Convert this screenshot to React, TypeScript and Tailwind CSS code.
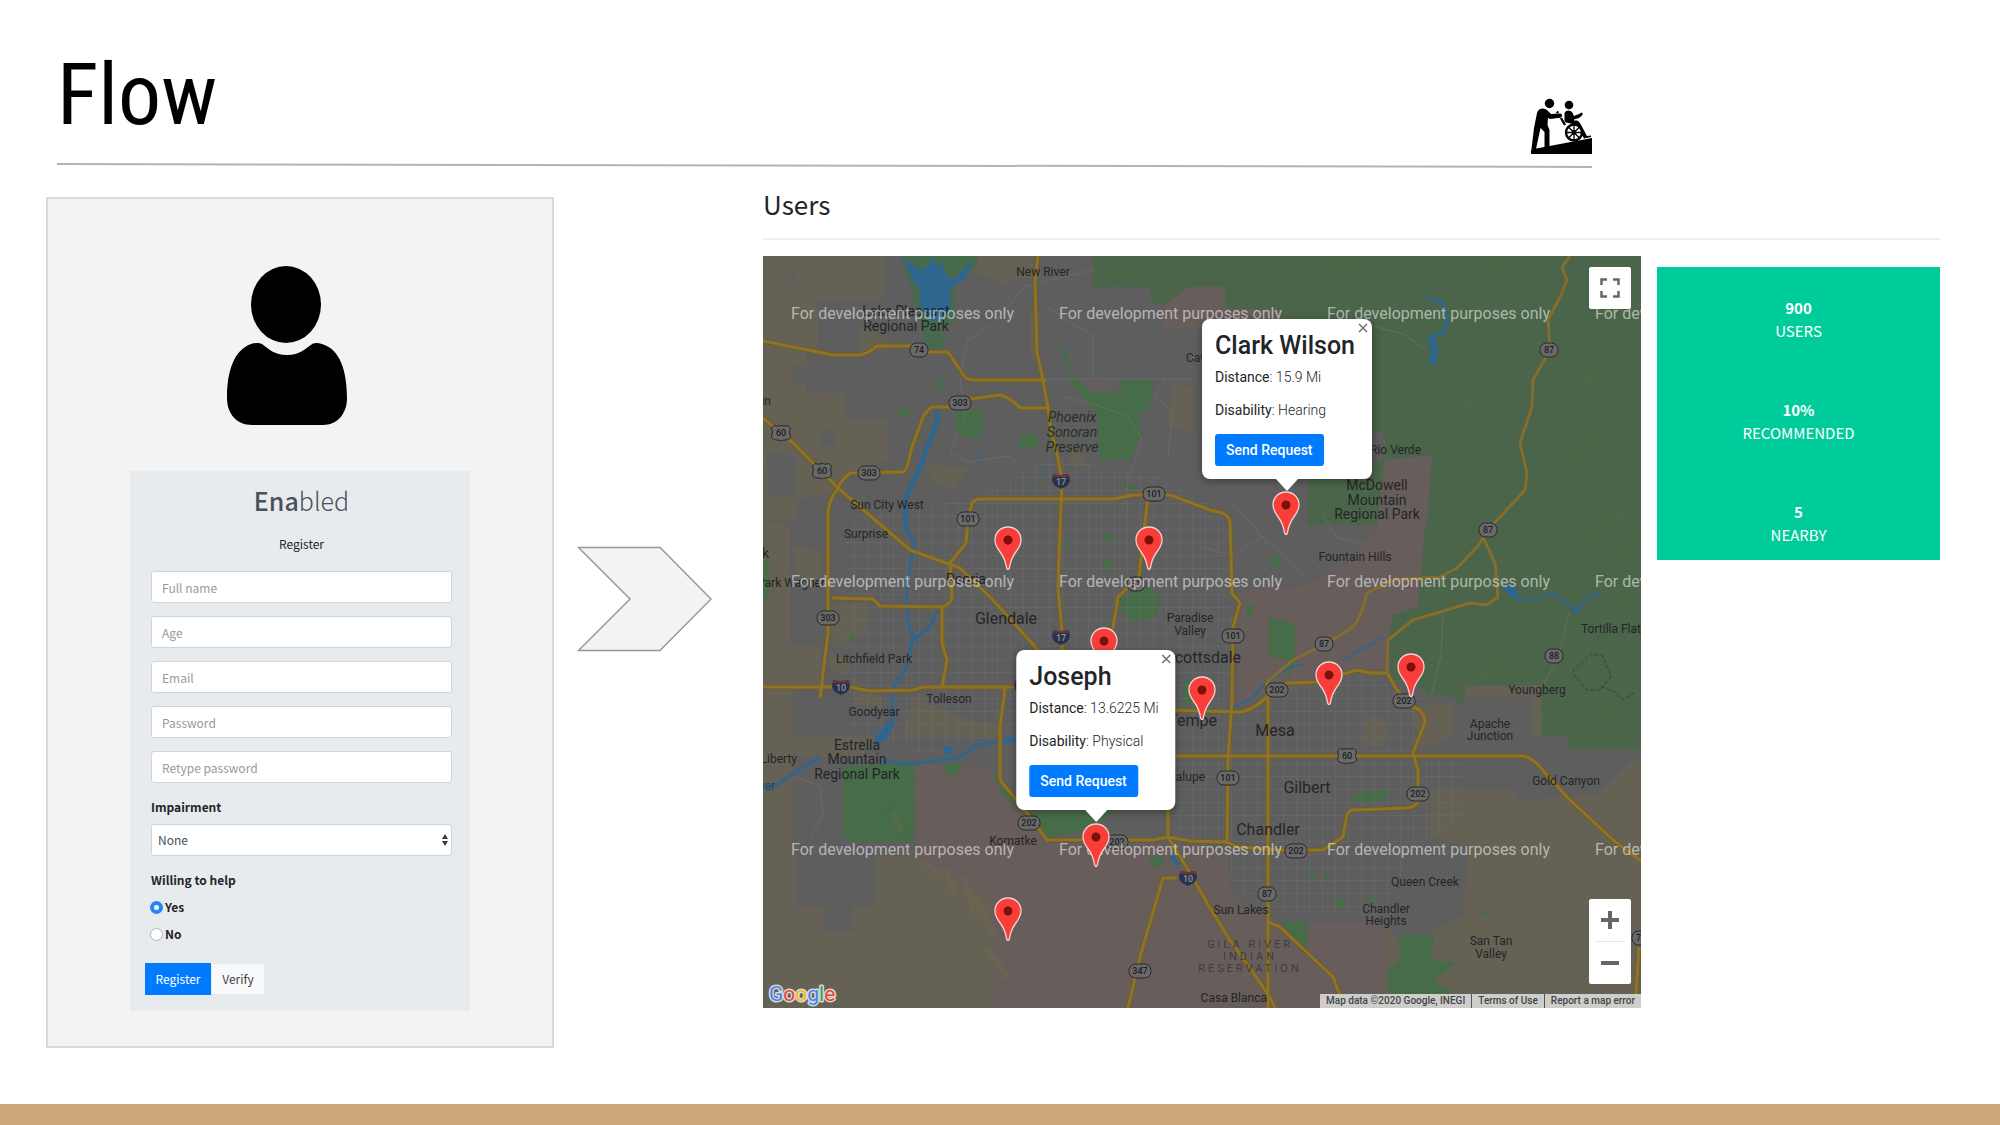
import { useState } from "react";

type Point = [number, number];

const ROADS = [
  // I-17
  "M275 0L272 24L274 97L280 124L285 152L288 176L294 197L299 224L297 274L295 331L299 377L299 431",
  // 74
  "M0 85L70 99H97Q106 97 114 90H150L165 96H185L202 121Q205 124 212 124H283",
  // 303
  "M285 152H257Q247 141 237 139L207 143L187 151H169Q162 156 160 161L149 191L144 211Q142 216 139 216L87 217Q78 224 74 234Q65 244 65 261V377L57 442",
  // 60 / Grand Ave
  "M0 162L30 187L59 216L74 231L104 257L147 294L197 312L230 344L275 394L299 431",
  // 101 west and north
  "M179 431L184 404L179 387V351Q188 348 189 341L187 307L203 287L205 264L209 247Q212 243 217 243H350L370 239H407L447 254L460 257Q467 261 467 267L469 337L477 347L470 371L469 444L465 504L464 587",
  "M69 342L110 343L117 350L179 351",
  // I-10
  "M0 431H87L107 435L150 434L160 431H350L405 470V581L427 617L447 652L467 684L507 741L512 752",
  // 202
  "M242 432L237 471V524L264 557L284 584H390L405 581L427 585L464 586L474 591L520 594H560L580 581L583 564Q584 555 589 554L644 552Q655 550 655 544V514L650 497L662 466Q661 454 650 451L634 434L624 417H607L594 414L554 426L524 427L504 441Q488 455 477 456L405 454",
  // US 60
  "M405 500H760Q770 502 777 511L804 541L850 584L879 606",
  // 51
  "M385 240L376 321L355 341L350 371L345 431",
  // 87 south
  "M504 426L505 444V752",
  "M505 666L517 671L570 721L582 752",
  // 347
  "M414 622H400L377 701L365 752",
  "M876 691L872 752",
];

const MOUNTAIN_ROADS = [
  "M807 0L799 11L804 24L799 37L785 64L787 94L770 124L769 151L757 187L764 217L762 234L725 274L714 291L694 312L677 321L630 324L604 337Q598 362 590 371L564 387L530 404L504 426",
  "M720 281L732 307L735 341L724 349L707 347L650 364L625 384L624 417",
];

const MINOR_ROADS = [
  "M202 165L197 120L205 84L232 66L262 30",
  "M262 30L330 14M281 123H430",
  "M285 52L330 80V119M297 140L330 148L364 160L379 182L366 222L360 250",
  "M402 120L392 140L410 156L405 200",
  "M610 70L640 78L664 94",
  "M680 358L678 400L668 440",
  "M806 356L796 400L780 429",
  "M30 520L57 530L60 560L48 580",
  "M120 152L147 180M437 290L470 300L500 280L540 320",
  "M197 172L187 196L206 206L245 200L262 212M470 250L490 268L505 290M560 260L574 282L600 288",
];

const RIVERS = [
  { d: "M174 154L175 164L168 181L157 211L142 244L143 274", w: 5 },
  { d: "M143 274L152 287L144 327V361L150 381L144 411L130 431L129 467", w: 3 },
  { d: "M129 467L114 484", w: 7 },
  { d: "M150 384L167 371L174 354", w: 3 },
  { d: "M-3 534L10 531L57 501M118 505L150 508L197 501L214 489L254 484", w: 3 },
  { d: "M664 41L680 47L684 64L680 78L667 81", w: 3 },
  { d: "M667 82L672 92L669 108", w: 7 },
  { d: "M740 331L757 344L774 342L790 337L814 355L820 345L837 337", w: 2 },
  { d: "M454 457L487 444L504 426L527 411L540 408M580 404L620 381", w: 2 },
  { d: "M215 192L216 216M268 230L282 220L282 210M300 102L309 86", w: 1 },
  { d: "M408 600L416 610", w: 5 },
];

const PARKS = [
  "M297 91L304 96L309 118L327 136H359V124H392L385 154L374 159L379 177L367 204L337 204L334 157L312 132Z",
  "M193 156L217 152L222 170L213 184L193 178Z",
  "M255 180L275 178V192L257 194Z",
  "M132 152L150 154L140 164Z",
  "M80 511L151 506V586L87 586L80 577Z",
  "M227 514L248 534L262 556L357 554L320 574L284 582L262 556L240 540Z",
  "M357 343L382 328L397 341L392 362L367 367L358 355Z",
  "M336 300L352 307L343 317Z",
  "M508 299L521 303L514 313L508 307Z",
  "M506 361L532 368V402L524 428V404L506 400Z",
  "M483 348L491 350L489 362L484 358Z",
  "M588 540L610 534H626L622 546L588 546Z",
  "M518 666H544L543 694Z",
  "M637 677L672 680L667 704L694 707L670 724L687 734L684 744H626L624 714L637 704Z",
  "M572 642L584 642L580 652H572Z",
  "M545 615L553 618L549 626Z",
  "M718 654L726 656L722 662Z",
  "M420 428L426 420L430 446L420 450Z",
  "M0 304L6 308V342H0Z",
  "M180 508L200 506L194 520L184 518Z",
  "M173 126L180 124V132L174 132Z",
  "M301 283L307 286L306 294L301 292Z",
  "M342 276L350 280L347 288L342 285Z",
  "M202 278L208 276L206 284Z",
  "M360 226L374 230L372 234L360 231Z",
  "M210 340L216 338L214 345Z",
  "M86 378L91 376L92 386L87 384Z",
  "M62 246L70 244L68 256L62 258Z",
  "M386 602L400 600V610L388 612Z",
  "M560 620L570 622L566 630Z",
  "M602 640L614 642L610 648Z",
];

const LABELS: { text: string; x: number; y: number; size?: "lg" | "md"; anchor?: "start" | "end" }[] = [
  { text: "New River", x: 280, y: 20 },
  { text: "Lake Pleasant", x: 143, y: 60, size: "md" },
  { text: "Regional Park", x: 143, y: 75, size: "md" },
  { text: "Cave Creek", x: 423, y: 106, anchor: "start" },
  { text: "in", x: 8, y: 149, anchor: "end" },
  { text: "Sun City West", x: 124, y: 253 },
  { text: "Surprise", x: 103, y: 282 },
  { text: "k", x: 6, y: 302, size: "md", anchor: "end" },
  { text: "Park Wagner", x: 62, y: 331, anchor: "end" },
  { text: "Peoria", x: 203, y: 328, size: "md" },
  { text: "Glendale", x: 243, y: 368, size: "lg" },
  { text: "Litchfield Park", x: 111, y: 407 },
  { text: "Tolleson", x: 186, y: 447 },
  { text: "Goodyear", x: 111, y: 460 },
  { text: "Estrella", x: 94, y: 494, size: "md" },
  { text: "Mountain", x: 94, y: 508, size: "md" },
  { text: "Regional Park", x: 94, y: 523, size: "md" },
  { text: "Liberty", x: 34, y: 507, anchor: "end" },
  { text: "Komatke", x: 250, y: 589 },
  { text: "Paradise", x: 427, y: 366 },
  { text: "Valley", x: 427, y: 379 },
  { text: "Scottsdale", x: 478, y: 407, size: "lg", anchor: "end" },
  { text: "Tempe", x: 454, y: 470, size: "lg", anchor: "end" },
  { text: "Guadalupe", x: 442, y: 525, anchor: "end" },
  { text: "Mesa", x: 512, y: 480, size: "lg" },
  { text: "Gilbert", x: 544, y: 537, size: "lg" },
  { text: "Chandler", x: 505, y: 579, size: "lg" },
  { text: "Fountain Hills", x: 592, y: 305 },
  { text: "McDowell", x: 614, y: 234, size: "md" },
  { text: "Mountain", x: 614, y: 249, size: "md" },
  { text: "Regional Park", x: 614, y: 263, size: "md" },
  { text: "Rio Verde", x: 658, y: 198, anchor: "end" },
  { text: "Tortilla Flat", x: 818, y: 377, anchor: "start" },
  { text: "Youngberg", x: 774, y: 438 },
  { text: "Apache", x: 727, y: 472 },
  { text: "Junction", x: 727, y: 484 },
  { text: "Gold Canyon", x: 803, y: 529 },
  { text: "Queen Creek", x: 662, y: 630 },
  { text: "Chandler", x: 623, y: 657 },
  { text: "Heights", x: 623, y: 669 },
  { text: "Sun Lakes", x: 478, y: 658 },
  { text: "San Tan", x: 728, y: 689 },
  { text: "Valley", x: 728, y: 702 },
  { text: "Casa Blanca", x: 504, y: 746, anchor: "end" },
];

const STATE_SHIELDS: [string, number, number][] = [
  ["74", 156, 94],
  ["303", 197, 147],
  ["303", 106, 217],
  ["101", 205, 263],
  ["101", 391, 238],
  ["303", 65, 362],
  ["51", 373, 328],
  ["202", 266, 567],
  ["202", 354, 586],
  ["101", 470, 380],
  ["87", 561, 388],
  ["202", 514, 434],
  ["202", 641, 445],
  ["101", 465, 522],
  ["202", 655, 538],
  ["202", 533, 595],
  ["87", 504, 638],
  ["347", 377, 715],
  ["87", 786, 94],
  ["87", 725, 274],
  ["88", 791, 400],
  ["79", 878, 682],
];

const US_SHIELDS: Point[] = [
  [18, 177],
  [59, 215],
  [584, 500],
];

const INTERSTATES: [string, number, number][] = [
  ["17", 298, 225],
  ["17", 298, 381],
  ["10", 78, 431],
  ["10", 260, 431],
  ["10", 425, 622],
];

const PINS: Point[] = [
  [245, 314],
  [386, 314],
  [341, 415],
  [523, 279],
  [439, 464],
  [566, 449],
  [648, 441],
  [333, 611],
  [245, 685],
];

const STATS = [
  { value: "900", label: "USERS" },
  { value: "10%", label: "RECOMMENDED" },
  { value: "5", label: "NEARBY" },
];

const FIELDS = [
  { name: "fullName", placeholder: "Full name", type: "text" },
  { name: "age", placeholder: "Age", type: "text" },
  { name: "email", placeholder: "Email", type: "email" },
  { name: "password", placeholder: "Password", type: "password" },
  { name: "retypePassword", placeholder: "Retype password", type: "password" },
];

const LABEL_SIZES = { lg: "text-[16px]", md: "text-[14px]" };

const RampLogo = () => (
  <svg viewBox="0 0 61 56" className="h-14 w-[61px]" aria-label="Enabled logo">
    <path d="M0 51.500L61 40V56H0z" />
    <circle cx="18.500" cy="5.500" r="4.700" />
    <path d="M9 11Q13 9.500 16 12L20 16L29 15.500Q31.500 16 31 18Q30.500 19.500 29 19.700L19 21L17 20L16.500 27L18.500 32L18.500 50H13.500V34L9.500 30L5 51H.5L3 30L6 15Q7 12 9 11z" />
    <circle cx="38" cy="7" r="4.300" />
    <path d="M35 13Q39 11.500 41 14L43 18L48 16L50.500 14.500Q52.500 15 51 17.500L48 20L43 21.500V22.500H46Q48 23 49.500 26L56 38L60 37.500V39L53 40.500L46 27L35 24.500Q33.500 24 33.500 22V15z" />
    <path d="M30 20L34 27M26 13.500L27 15" stroke="#000" strokeWidth="2.400" />
    <circle cx="43" cy="34.500" r="8" fill="#fff" stroke="#000" strokeWidth="2.400" />
    <path d="M43 26V43M34.500 34.500H51.500M37 28.500L49 40.500M49 28.500L37 40.500" stroke="#000" strokeWidth="1.300" />
    <circle cx="43" cy="34.500" r="2.400" />
  </svg>
);

const PersonIcon = () => (
  <svg viewBox="0 0 120 159" className="ml-[179px] h-[159px] w-[120px]" aria-hidden="true">
    <ellipse cx="59" cy="38.500" rx="35" ry="38.500" />
    <path d="M35 78C42 83 47 89 60 89C73 89 78 83 86 77.500Q90 76.500 95 78C113 83 120 105 120 132C120 148 110 159 96 159H25C10 159 0 148 0 132C0 105 7 84 24 78Q31 76 35 78z" />
  </svg>
);

const RegisterForm = () => {
  const [willing, setWilling] = useState("yes");

  return (
    <form
      onSubmit={(e) => e.preventDefault()}
      className="mx-[82px] mt-[46px] bg-[#e8ebee] pt-[11px] pr-[18px] pb-4 pl-[21px] text-[12px] leading-5 text-[#212529]"
    >
      <h2 className="text-center text-[25px] leading-9 font-light text-[#495057]">
        <span className="font-medium">Ena</span>bled
      </h2>
      <p className="mt-4 text-center">Register</p>

      <div className="mt-[17px] flex flex-col gap-[13px]">
        {FIELDS.map((field) => (
          <input
            key={field.name}
            name={field.name}
            type={field.type}
            placeholder={field.placeholder}
            aria-label={field.placeholder}
            className="h-8 w-full rounded-[3px] border border-[#ced4da] bg-white px-[10px] outline-none placeholder:text-[#939ba2] placeholder:opacity-100"
          />
        ))}
      </div>

      <label htmlFor="impairment" className="mt-[14px] block font-bold">
        Impairment
      </label>
      <div className="relative mt-[7px]">
        <select
          id="impairment"
          className="h-8 w-full appearance-none rounded-[3px] border border-[#ced4da] bg-white px-[6px] text-[#495057] outline-none"
        >
          <option>None</option>
          <option>Physical</option>
          <option>Hearing</option>
        </select>
        <svg viewBox="0 0 6 12" className="pointer-events-none absolute top-[10px] right-1 h-3 w-[6px]" fill="#343a40">
          <path d="M3 0L6 5H0zM3 12L6 7H0z" />
        </svg>
      </div>

      <fieldset className="mt-[14px]">
        <legend className="font-bold">Willing to help</legend>
        {["Yes", "No"].map((option) => (
          <label key={option} className="mt-[7px] -ml-px flex items-center gap-[2px] font-bold">
            <input
              type="radio"
              name="willing"
              checked={willing === option.toLowerCase()}
              onChange={() => setWilling(option.toLowerCase())}
              className="h-[13px] w-[13px] appearance-none rounded-full border border-[#adb5bd] bg-white checked:border-4 checked:border-[#2388f5]"
            />
            {option}
          </label>
        ))}
      </fieldset>

      <div className="mt-[19px] -ml-[6px] flex">
        <button type="submit" className="h-8 w-[66px] bg-[#007bff] text-white">
          Register
        </button>
        <button type="button" className="h-8 w-[54px] border border-[#e9ecef] bg-[#f8f9fa] text-[#444]">
          Verify
        </button>
      </div>
    </form>
  );
};

const MapCanvas = () => (
  <svg viewBox="0 0 879 752" preserveAspectRatio="xMinYMin slice" className="h-full w-full font-[Roboto,sans-serif]">
    <defs>
      <pattern id="streets" width="13" height="13" patternUnits="userSpaceOnUse">
        <path d="M0 .5H13M.5 0V13" stroke="#6b6c6d" strokeWidth=".8" opacity=".6" />
      </pattern>
      <filter id="soft">
        <feGaussianBlur stdDeviation="2" />
      </filter>
    </defs>

    <rect width="879" height="752" fill="#5e5e5f" />

    {/* Desert */}
    <g fill="#656155">
      <path d="M0 0H120V44H55V94H97V70L125 84V95H43V137H82V164H124V205L90 216L72 236L34 244V264H0z" />
      <path d="M0 264L27 270V390H57V430H30V480H110L100 500H30V600H32V650H60V676H90V650H112V600H152L229 640V752H0z" />
      <path d="M210 0H270V20L240 28L212 16z" />
      <path d="M64 350L104 345V378L70 392z" />
      <path d="M667 534H750L757 545L837 537L870 504L879 500V752H580L622 667L640 690L700 660L705 590L667 581z" />
      <path d="M702 430H779V481H770V441H702zM600 462H622V490H600zM645 451L690 447V480L660 492z" />
      <path d="M150 440L200 462L240 470V480L140 480zM410 128L430 130V176L404 170zM267 52H272V102H267z" />
      <path d="M163 207L205 213L190 234L170 228zM310 190L324 202L318 214L306 208z" />
      <path d="M88 420L118 442V452L90 448zM66 396L88 404L84 420L68 414zM30 290L60 296L56 330L34 322z" />
    </g>
    <g fill="#5e5e5f">
      <path d="M30 110H43V128H30zM56 175L72 172V190H56zM20 20L32 18V26zM4 196L34 200V240L6 238z" />
    </g>

    {/* Reservations */}
    <g fill="#675d5b">
      <path d="M151 506L225 510L262 556L284 584L437 588L465 600L467 637L507 667H622V752H229V640L152 604z" />
      <path d="M622 204L669 199L655 351L630 361L624 381V417H594L504 441L474 451V334L537 331L584 311L614 269z" />
      <path d="M425 31H462V52H517V74H400V50z" />
      <path d="M324 125L347 124V136H327z" />
    </g>

    {/* National forest */}
    <path
      d="M330 0V31H387V44L400 50L425 31H462V52L517 54L520 110L612 177H622V204H545V269H614L622 204L669 199L655 351L630 359L625 382L629 424H650L667 441H690L694 447H702V429H779V481H805V494H879V0z"
      fill="#4a6549"
    />
    <path d="M622 204L669 199L664 269L614 269z" fill="#675d5b" />
    <g stroke="#57703e" strokeWidth="3" opacity=".5" filter="url(#soft)">
      <path d="M700 20L740 8M560 12L600 4M810 130L840 118M700 150L730 140M820 290L870 250M840 310L879 280M810 200L850 170M700 430L740 410M820 470L850 450M350 20L380 12M830 60L850 50M640 150L660 142M846 350L870 336M760 460L776 450" />
    </g>
    <path d="M137 0L150 40L164 92H180V72L192 66V30L214 10V0z" fill="#47694c" />
    <g fill="#466c48">
      {PARKS.map((d) => (
        <path key={d} d={d} />
      ))}
    </g>
    <g stroke="#716c4c" strokeWidth="4" opacity=".7" filter="url(#soft)">
      <path d="M160 606L180 622M182 612L192 640M200 620L212 660M212 640L232 680M222 690L246 724M130 555L138 576" />
    </g>

    {/* Street grid of the urban area */}
    <path
      d="M84 262L205 244L290 200L400 222L467 260V330L474 451L504 441L594 417L662 440L660 496L700 497V560L650 594L620 660H510L470 630L464 588H405V500L240 480L160 500L80 470V380z"
      fill="url(#streets)"
    />

    <g fill="#2f668f">
      <path d="M139 0L150 24L157 34V57L172 66L187 57V36L192 28L202 24L206 12L211 6L204 8L197 18L188 24L180 14V4L176 12L168 0L166 10L158 14L148 8z" />
      <path d="M114 480L130 470L124 482L112 490zM181 490H189V498H181zM241 482L252 480V484L242 487z" />
      <path d="M740 330L752 330L757 344L748 342zM808 352L820 350L814 358z" />
    </g>
    <g stroke="#2f668f" fill="none" strokeLinejoin="round">
      {RIVERS.map((river) => (
        <path key={river.d} d={river.d} strokeWidth={river.w} />
      ))}
    </g>

    <g stroke="#6c6d6e" strokeWidth="1" fill="none" opacity=".8">
      {MINOR_ROADS.map((d) => (
        <path key={d} d={d} />
      ))}
    </g>
    <path
      d="M809 416L828 398L840 400L848 420L838 434L824 434L809 416M838 430L852 436L860 444L872 436"
      fill="none"
      stroke="#37433a"
      strokeDasharray="4 2"
    />

    <g fill="none" strokeLinejoin="round">
      {ROADS.map((d) => (
        <path key={d} d={d} stroke="#6f5d2b" strokeWidth="5" />
      ))}
      {ROADS.map((d) => (
        <path key={d} d={d} stroke="#8d7329" strokeWidth="3" />
      ))}
      {MOUNTAIN_ROADS.map((d) => (
        <path key={d} d={d} stroke="#856d2c" strokeWidth="3" />
      ))}
    </g>

    {/* Route shields */}
    <g textAnchor="middle" className="text-[9px] font-medium">
      {STATE_SHIELDS.map(([route, x, y]) => (
        <g key={`${route}-${x}`}>
          <rect
            x={route.length > 2 ? x - 11 : x - 9}
            y={y - 7}
            width={route.length > 2 ? 22 : 18}
            height="14"
            rx="6.500"
            fill="#69696a"
            stroke="#29292a"
          />
          <text x={x} y={y + 3} fill="#202021">
            {route}
          </text>
        </g>
      ))}
      {US_SHIELDS.map(([x, y]) => (
        <g key={x} transform={`translate(${x} ${y})`}>
          <path
            d="M-7 -7.500Q-3 -6 0 -7.500Q3 -6 7 -7.500L9.500 -5Q7.500 -1 9.500 3Q9 7 4 7Q1 7 0 8Q-1 7 -4 7Q-9 7 -9.500 3Q-7.500 -1 -9.500 -5z"
            fill="#69696a"
            stroke="#29292a"
          />
          <text y="3" fill="#202021">
            60
          </text>
        </g>
      ))}
      {INTERSTATES.map(([route, x, y]) => (
        <g key={`${x}-${y}`} transform={`translate(${x} ${y})`}>
          <path d="M-7.500 -7Q0 -5 7.500 -7Q11 0 6 5L0 8L-6 5Q-11 0 -7.500 -7z" fill="#27334c" />
          <path d="M-7.500 -7Q0 -5 7.500 -7L8.500 -4H-8.500z" fill="#6b3436" />
          <text y="4" fill="#8f9296">
            {route}
          </text>
        </g>
      ))}
    </g>

    {/* Place names */}
    <g fill="#242526">
      {LABELS.map(({ text, x, y, size, anchor }) => (
        <text
          key={`${text}-${y}`}
          x={x}
          y={y}
          textAnchor={anchor ?? "middle"}
          className={size ? LABEL_SIZES[size] : "text-[12px]"}
        >
          {text}
        </text>
      ))}
    </g>
    <g fill="#243024" textAnchor="middle" className="text-[14px] italic">
      <text x="309" y="166">Phoenix</text>
      <text x="309" y="181">Sonoran</text>
      <text x="309" y="196">Preserve</text>
    </g>
    <g fill="#3e3d3d" textAnchor="middle" className="text-[11px] tracking-[3px]">
      <text x="487" y="692">GILA RIVER</text>
      <text x="487" y="704">INDIAN</text>
      <text x="487" y="716">RESERVATION</text>
    </g>
    <text x="-4" y="534" fill="#1f4560" className="text-[12px]">
      ver
    </text>

    {/* Watermark, one per tile */}
    <g fill="#fff" fillOpacity=".55" className="text-[16px]">
      {[63, 331, 599].map((y) =>
        [28, 296, 564, 832].map((x) => (
          <text key={`${x}-${y}`} x={x} y={y}>
            For development purposes only
          </text>
        )),
      )}
    </g>
  </svg>
);

const Pin = ({ x, y }: { x: number; y: number }) => (
  <svg
    viewBox="0 0 28 44"
    className="absolute h-11 w-7 -translate-x-1/2 -translate-y-full"
    style={{ left: x, top: y }}
    aria-hidden="true"
  >
    <path
      d="M14 1C6.500 1 1 6.800 1 14C1 19 3.500 22.500 6.500 26.500C9.500 30.500 11.500 35 12.500 41.500Q13 43.500 14 43.500Q15 43.500 15.500 41.500C16.500 35 18.500 30.500 21.500 26.500C24.500 22.500 27 19 27 14C27 6.800 21.500 1 14 1z"
      fill="#f93e3a"
      stroke="#f3d3d1"
      strokeWidth="1.300"
    />
    <circle cx="14" cy="14" r="4.500" fill="#7c100c" />
  </svg>
);

interface InfoWindowProps {
  x: number;
  y: number;
  name: string;
  distance: string;
  disability: string;
}

const InfoWindow = ({ x, y, name, distance, disability }: InfoWindowProps) => (
  <div className="absolute -translate-x-1/2 -translate-y-full pb-[11px]" style={{ left: x, top: y }}>
    <div className="relative rounded-lg bg-white pt-3 pr-[17px] pb-[13px] pl-[13px] text-[14px] leading-5 text-[#212529] shadow-[0_2px_7px_1px_rgba(0,0,0,0.3)]">
      <button type="button" aria-label="Close" className="absolute top-1 right-1 h-[10px] w-[10px]">
        <svg viewBox="0 0 10 10" stroke="#6b6b6b" strokeWidth="1.400">
          <path d="M1 1L9 9M9 1L1 9" />
        </svg>
      </button>
      <h3 className="text-[25px] leading-[30px] font-medium">{name}</h3>
      <p className="mt-[6px] font-light">
        <span className="font-normal">Distance</span>: {distance}
      </p>
      <p className="mt-[13px] font-light">
        <span className="font-normal">Disability</span>: {disability}
      </p>
      <button type="button" className="mt-[14px] h-8 rounded-[3px] bg-[#007bff] px-[11px] font-medium text-white">
        Send Request
      </button>
      <svg viewBox="0 0 22 12" className="absolute top-full left-1/2 h-3 w-[22px] -translate-x-1/2" fill="#fff">
        <path d="M0 0H22L11 12z" />
      </svg>
    </div>
  </div>
);

const UsersMap = () => (
  <div className="relative h-[752px] min-w-0 flex-1 overflow-hidden font-[Roboto,sans-serif]">
    <MapCanvas />

    {PINS.map(([x, y]) => (
      <Pin key={`${x}-${y}`} x={x} y={y} />
    ))}
    <InfoWindow x={524} y={234} name="Clark Wilson" distance="15.9 Mi" disability="Hearing" />
    <InfoWindow x={333} y={565} name="Joseph" distance="13.6225 Mi" disability="Physical" />

    <button
      type="button"
      aria-label="Toggle fullscreen view"
      className="absolute top-[11px] right-[10px] flex h-[42px] w-[42px] items-center justify-center rounded-[2px] bg-white"
    >
      <svg viewBox="0 0 20 20" className="h-5 w-5" fill="none" stroke="#666" strokeWidth="2.500">
        <path d="M1.500 7V1.500H7M13 1.500H18.500V7M18.500 13V18.500H13M7 18.500H1.500V13" />
      </svg>
    </button>

    <div className="absolute right-[10px] bottom-6 flex w-[42px] flex-col items-center rounded-[2px] bg-white">
      <button type="button" aria-label="Zoom in" className="flex h-[42px] w-full items-center justify-center">
        <svg viewBox="0 0 20 20" className="h-5 w-5" stroke="#666" strokeWidth="4">
          <path d="M1 10H19M10 1V19" />
        </svg>
      </button>
      <div className="h-px w-[30px] bg-[#e6e6e6]" />
      <button type="button" aria-label="Zoom out" className="flex h-[42px] w-full items-center justify-center">
        <svg viewBox="0 0 20 20" className="h-5 w-5" stroke="#666" strokeWidth="4">
          <path d="M1 10H19" />
        </svg>
      </button>
    </div>

    <svg viewBox="0 0 76 30" className="absolute bottom-0 left-1 h-[30px] w-[76px]" aria-label="Google">
      <text
        x="2"
        y="23"
        stroke="#d8d8d8"
        strokeWidth="3"
        strokeLinejoin="round"
        paintOrder="stroke"
        className="text-[21px]"
      >
        <tspan fill="#4285f4">G</tspan>
        <tspan fill="#ea4335">o</tspan>
        <tspan fill="#fbbc04">o</tspan>
        <tspan fill="#4285f4">g</tspan>
        <tspan fill="#34a853">l</tspan>
        <tspan fill="#ea4335">e</tspan>
      </text>
    </svg>

    <div className="absolute right-0 bottom-0 flex h-[14px] items-center bg-[#cdcdcc] text-[10px] leading-[14px] font-medium text-[#444]">
      <span className="px-[6px]">Map data ©2020 Google, INEGI</span>
      <a href="#terms" className="border-l border-[#555] px-[6px]">
        Terms of Use
      </a>
      <a href="#report" className="border-l border-[#555] px-[6px]">
        Report a map error
      </a>
    </div>
  </div>
);

const App = () => (
  <div className="flex min-h-screen flex-col bg-white font-['Noto_Sans_CJK_SC','Noto_Sans_CJK_JP',sans-serif]">
    <header className="mr-[20.4%] ml-[57px]">
      <div className="flex items-end justify-between pt-9">
        <h1 className="font-['Roboto_Condensed','Liberation_Sans_Narrow','Noto_Sans',sans-serif] text-[86px] leading-[118px] text-black">
          Flow
        </h1>
        <RampLogo />
      </div>
      <svg viewBox="0 0 1536 6" preserveAspectRatio="none" className="mt-[8px] h-[6px] w-full">
        <path d="M0 2L1536 5" stroke="#b3b3b3" strokeWidth="2" />
      </svg>
    </header>

    <main className="mt-[18px] mr-[60px] ml-[46px] flex items-start">
      <section className="mt-[11px] w-[508px] shrink-0 border-2 border-[#d9d9d9] bg-[#f3f3f3] pt-[67px] pb-[35px]">
        <PersonIcon />
        <RegisterForm />
      </section>

      <svg viewBox="0 0 136 106" className="mt-[360px] mr-[50px] ml-[23px] h-[106px] w-[136px] shrink-0">
        <path d="M1.500 1.500H83L134 53L83 104.500H1.500L53 53z" fill="#f3f3f3" stroke="#999" strokeWidth="1.500" />
      </svg>

      <section className="min-w-0 flex-1">
        <h2 className="border-b-2 border-[#eee] pb-[16px] text-[26px] leading-9 text-[#212529]">Users</h2>
        <div className="mt-4 flex items-start gap-4">
          <UsersMap />
          <dl className="mt-[11px] flex w-[283px] shrink-0 flex-col gap-14 bg-[#00cc9b] pt-[29px] pb-[14px] text-center text-[15px] leading-[23px] text-white">
            {STATS.map((stat) => (
              <div key={stat.label} className="flex flex-col-reverse">
                <dt>{stat.label}</dt>
                <dd className="font-bold">{stat.value}</dd>
              </div>
            ))}
          </dl>
        </div>
      </section>
    </main>

    <footer className="mt-auto h-[21px] bg-[#cca677]" />
  </div>
);

export default App;
